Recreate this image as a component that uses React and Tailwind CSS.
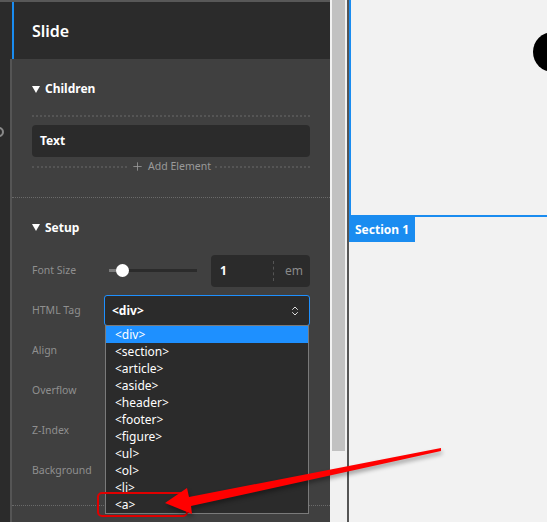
import React from 'react';
import { ChevronsUpDown, Plus } from 'lucide-react';

const tags = ['<div>', '<section>', '<article>', '<aside>', '<header>', '<footer>', '<figure>', '<ul>', '<ol>', '<li>', '<a>'];

function Caret() {
  return (
    <svg width="8" height="7" viewBox="0 0 8 7">
      <polygon points="0,0 8,0 4,7" fill="#fff" />
    </svg>
  );
}

function Row({ label, children }) {
  return (
    <div className="flex h-[40px] items-center">
      <div className="w-[72px] text-[10.5px] text-[#8f8f8f]">{label}</div>
      <div className="flex-1">{children}</div>
    </div>
  );
}

export default function App() {
  return (
    <div className="relative flex h-[522px] w-[547px] overflow-hidden bg-[#f2f2f2] font-['Noto_Sans',sans-serif]">
      {/* left editor column */}
      <div className="flex h-full w-[330px] border-t-2 border-[#585858]">
        <div className="relative h-full w-[10px] bg-[#2b2b2b]">
          <div className="absolute left-[-6px] top-[125px] h-[10px] w-[10px] rounded-full border-2 border-[#8a8a8a]" />
        </div>
        <div className="flex h-full flex-1 flex-col">
          {/* header */}
          <div className="h-[57px] border-l-2 border-[#2b2b2b] bg-[#2b2b2b]">
            <div className="flex h-full items-center border-l-2 border-[#1a8cf0] pl-[18px]">
              <span className="text-[16px] font-semibold text-white">Slide</span>
            </div>
          </div>

          {/* body */}
          <div className="flex-1 border-l-2 border-[#555] bg-[#404040]">
            {/* Children */}
            <div className="px-5 pt-[21px]">
              <div className="flex items-center gap-[5px] text-[12px] font-bold text-white">
                <Caret />
                Children
              </div>
              <div className="mt-[17px] border-t-2 border-dotted border-[#555]" />
              <div className="mt-[8px] flex h-[32px] items-center rounded-[4px] bg-[#2b2b2b] px-2 text-[12px] font-bold text-white">
                Text
              </div>
              <div className="mt-[2px] flex items-center gap-1">
                <div className="flex-1 border-t-2 border-dotted border-[#555]" />
                <div className="flex items-center gap-[4px] text-[10.5px] text-[#9a9a9a]">
                  <Plus size={13} strokeWidth={1.5} />
                  Add Element
                </div>
                <div className="flex-1 border-t-2 border-dotted border-[#555]" />
              </div>
            </div>
            <div className="mt-[22px] border-t border-dotted border-[#6a6a6a]" />

            {/* Setup */}
            <div className="px-5 pt-[21px]">
              <div className="flex items-center gap-[5px] text-[12px] font-bold text-white">
                <Caret />
                Setup
              </div>
              <div className="mt-[14px]">
                <Row label="Font Size">
                  <div className="flex items-center gap-[14px]">
                    <div className="relative ml-[5px] h-[3px] w-[88px] bg-[#2b2b2b]">
                      <div className="h-full w-[13px] bg-[#7a7a7a]" />
                      <div className="absolute left-[7px] top-[-5px] h-[13px] w-[13px] rounded-full bg-white" />
                    </div>
                    <div className="flex h-[32px] flex-1 items-center rounded-[4px] bg-[#2b2b2b] text-[12px]">
                      <span className="w-[62px] pl-[9px] font-bold text-white">1</span>
                      <div className="h-[20px] border-l border-dashed border-[#555]" />
                      <span className="pl-[11px] text-[#8a8a8a]">em</span>
                    </div>
                  </div>
                </Row>
                <Row label="HTML Tag">
                  <div className="relative">
                    <div className="flex h-[31px] items-center justify-between rounded-[3px] border border-[#1e90ff] bg-[#2b2b2b] pl-[7px] pr-[8px] text-[12px] font-bold text-white">
                      &lt;div&gt;
                      <ChevronsUpDown size={12} strokeWidth={2} className="text-[#ddd]" />
                    </div>
                    <div className="absolute left-[1px] top-[30px] z-10 w-[204px] border border-[#7a7a7a] bg-[#2b2b2b]">
                      {tags.map((t, i) => (
                        <div
                          key={t}
                          className={`flex h-[17px] items-center pl-[9px] text-[12px] text-white ${i === 0 ? 'bg-[#1e90ff]' : ''}`}
                        >
                          {t}
                        </div>
                      ))}
                    </div>
                  </div>
                </Row>
                <Row label="Align" />
                <Row label="Overflow" />
                <Row label="Z-Index" />
                <Row label="Background" />
              </div>
            </div>
            <div className="mt-[14px] border-t border-dotted border-[#6a6a6a]" />
          </div>
        </div>
      </div>

      {/* scrollbar */}
      <div className="h-full w-[17px] bg-[#f1f1f1] px-[2px]">
        <div className="h-[451px] w-[13px] bg-[#c1c1c1]" />
      </div>
      <div className="h-full w-[2px] bg-[#555]" />

      {/* canvas */}
      <div className="relative h-full flex-1 bg-[#f2f2f2]">
        <div className="h-[217px] border-b-2 border-l-2 border-[#1a8cf0]" />
        <div className="flex h-[25px] w-[66px] items-center justify-center bg-[#1a8cf0] text-[12px] font-bold text-white">
          Section 1
        </div>
        <div className="absolute left-[184px] top-[32px] h-[40px] w-[40px] rounded-full bg-black" />
      </div>

      {/* red annotation */}
      <div className="absolute left-[97px] top-[492px] z-20 h-[25px] w-[91px] rounded-[5px] border-2 border-[#e00000]" />
      <svg className="absolute left-0 top-0 z-20 drop-shadow-[1px_3px_2px_rgba(0,0,0,0.35)]" width="547" height="522" viewBox="0 0 547 522">
        <polygon points="165,503 187,488 189,497 441,448 441,451 191,506 192,514" fill="#ff0000" />
      </svg>
    </div>
  );
}
